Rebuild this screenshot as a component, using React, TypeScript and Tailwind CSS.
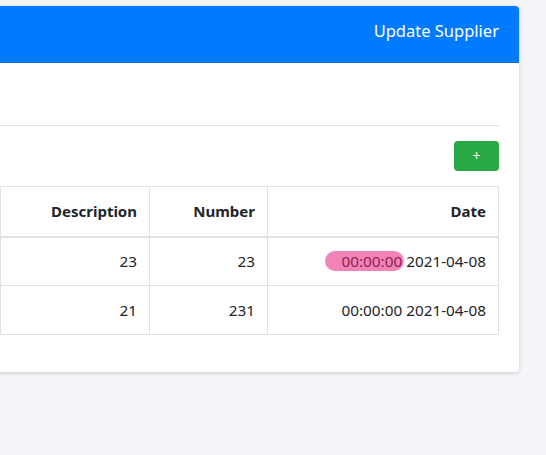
import React from 'react';

// Supplier rows shown in the table
const rows = [
    { id: 1, description: '23', number: '23', time: '00:00:00', date: '2021-04-08', marked: true },
    { id: 2, description: '21', number: '231', time: '00:00:00', date: '2021-04-08', marked: false },
];

export default function App() {
    return (
        <div className="min-h-[455px] bg-[#f4f5f9] pt-[6px] pr-[27px] overflow-hidden text-[#212529] font-['Noto_Sans',sans-serif]">
            <div className="-ml-4 bg-white rounded shadow-[0_1px_4px_rgba(0,0,0,0.18)]">
                {/* Card header */}
                <div className="h-[57px] bg-[#007bff] rounded-t flex items-center justify-end px-5 pb-[5px] border-b border-[#0d6ee0]">
                    <h3 className="text-[16.5px] text-white">Update Supplier</h3>
                </div>

                {/* Card body */}
                <div className="pl-4 pr-5 pb-[37px]">
                    <div className="h-[63px] border-b border-[#dee2e6]" />
                    <div className="flex justify-end mt-[15px]">
                        <button className="w-[45px] h-[30px] rounded bg-[#28a745] text-white text-sm leading-none">+</button>
                    </div>

                    <table className="w-full mt-[15px] border-collapse text-[15.3px] text-right">
                        <thead>
                            <tr className="h-[50px]">
                                <th className="border border-[#dee2e6] border-b-2 px-3 font-bold text-[15px]">Description</th>
                                <th className="w-[118px] border border-[#dee2e6] border-b-2 px-3 font-bold text-[15px]">Number</th>
                                <th className="w-[231px] border border-[#dee2e6] border-b-2 px-3 font-bold text-[15px]">Date</th>
                            </tr>
                        </thead>
                        <tbody>
                            {rows.map((row) => (
                                <tr key={row.id} className="h-[49px]">
                                    <td className="border border-[#dee2e6] px-3">{row.description}</td>
                                    <td className="border border-[#dee2e6] px-3">{row.number}</td>
                                    <td className="border border-[#dee2e6] px-3 whitespace-nowrap">
                                        {row.marked ? (
                                            <span className="relative inline-block">
                                                <span className="absolute -left-4 -right-[2px] top-[1px] bottom-[2px] rounded-full bg-[#f283b6]" />
                                                <span className="relative text-[#8e2259]">{row.time}</span>
                                            </span>
                                        ) : (
                                            row.time
                                        )}{' '}
                                        {row.date}
                                    </td>
                                </tr>
                            ))}
                        </tbody>
                    </table>
                </div>
            </div>
        </div>
    );
}
